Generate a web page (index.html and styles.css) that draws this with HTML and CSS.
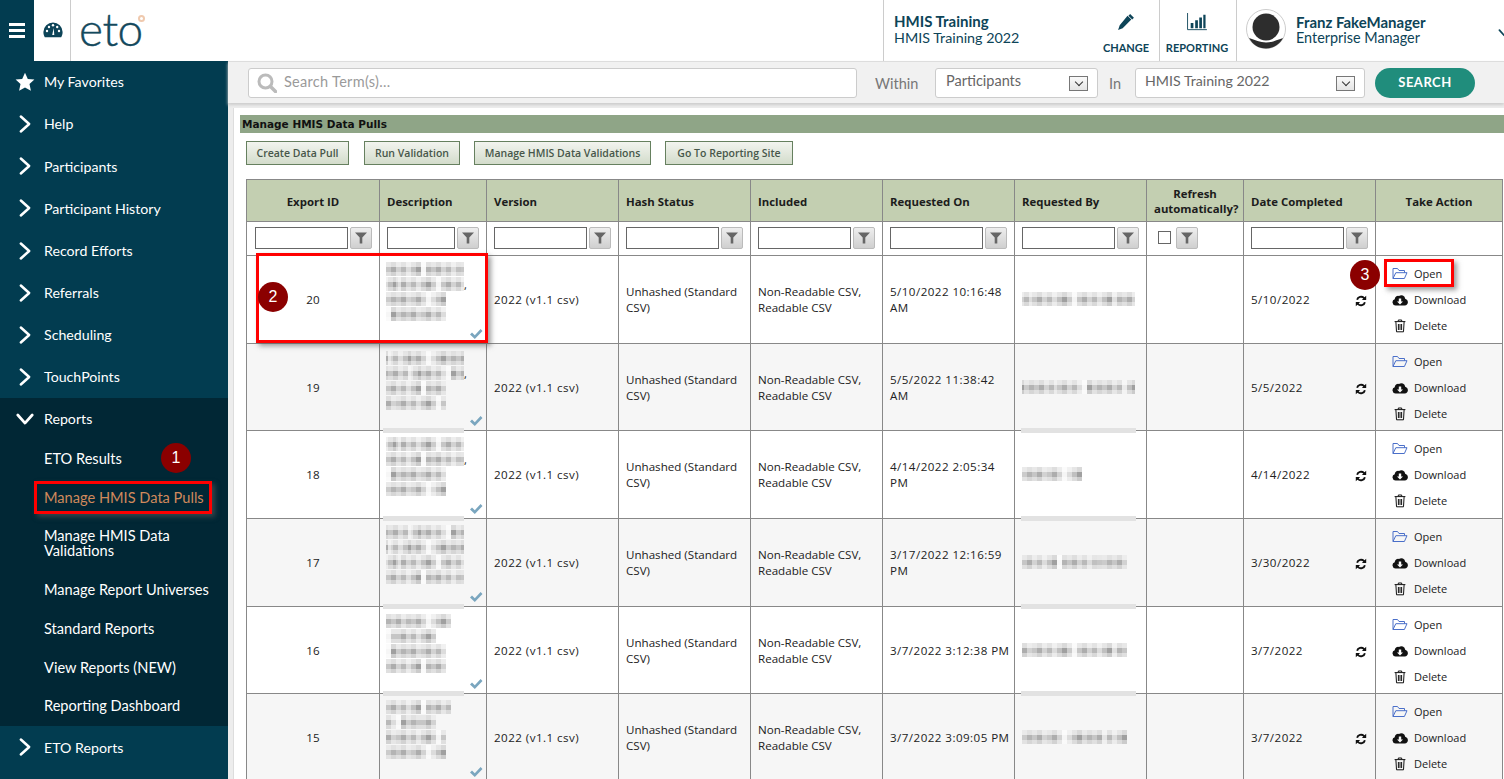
FILE: index.html
```html
<!DOCTYPE html>
<html lang="en">
<head>
    <meta charset="UTF-8">
    <title>Manage HMIS Data Pulls</title>
    <link rel="stylesheet" href="styles.css">
</head>
<body>
    <!-- icon sprite -->
    <svg class="sprite" xmlns="http://www.w3.org/2000/svg">
        <symbol id="i-chevron" viewBox="0 0 16 24"><path d="M3 3l10 9-10 9" fill="none" stroke="currentColor" stroke-width="3" stroke-linecap="round" stroke-linejoin="round"/></symbol>
        <symbol id="i-chevron-down" viewBox="0 0 20 14"><path d="M2 2l8 9 8-9" fill="none" stroke="currentColor" stroke-width="3" stroke-linecap="round" stroke-linejoin="round"/></symbol>
        <symbol id="i-star" viewBox="0 0 20 20"><path d="M10 .8l2.8 6.1 6.6.7-4.9 4.5 1.4 6.6L10 15.4l-5.9 3.3 1.4-6.6L.6 7.6l6.6-.7z" fill="currentColor"/></symbol>
        <symbol id="i-funnel" viewBox="0 0 12 12"><path d="M0 .5h12L7.3 5.6v5.9H4.7V5.6z" fill="#666"/></symbol>
        <symbol id="i-check" viewBox="0 0 14 12"><path d="M1 6.5l2-2 2.8 2.7L11.6 1 13.5 3l-7.7 8z" fill="#7aa6bf"/></symbol>
        <symbol id="i-sync" viewBox="0 0 14 14"><path d="M2.2 5.6A5 5 0 0 1 10.6 3.2L12.2 1.7V6H7.9L9.3 4.6A3.2 3.2 0 0 0 4 5.9zM11.8 8.4A5 5 0 0 1 3.4 10.8L1.8 12.3V8H6.1L4.7 9.4A3.2 3.2 0 0 0 10 8.1z" fill="#111"/></symbol>
        <symbol id="i-folder" viewBox="0 0 16 13"><path d="M1 11.5V1.5h4.5l1.5 2h5.5v2.2M1 11.5l2.8-5.8H15l-2.6 5.8z" fill="none" stroke="#4a6fc9" stroke-width="1" stroke-linejoin="round"/></symbol>
        <symbol id="i-cloud" viewBox="0 0 16 12"><path d="M3.6 11.6A3.3 3.3 0 0 1 2.7 5.2 3.4 3.4 0 0 1 7 2 3.9 3.9 0 0 1 13.2 4.7 3.5 3.5 0 0 1 12.7 11.6zM6.8 4.6v2.8H5L8 10.4l3-3H9.2V4.6z" fill="#111" fill-rule="evenodd"/></symbol>
        <symbol id="i-trash" viewBox="0 0 12 14"><path d="M4.3 2.2V1h3.4v1.2M.6 2.6h10.8M1.9 2.8l.6 10h7l.6-10M4.4 5v6M6 5v6M7.6 5v6" fill="none" stroke="#111" stroke-width="1"/></symbol>
    </svg>

    <header class="topbar">
        <button class="menu-toggle"><span></span><span></span><span></span></button>
        <div class="gauge">
            <svg width="20" height="16" viewBox="0 0 20 16">
                <path d="M10 .5A9.6 9.6 0 0 0 .4 10c0 2 .5 3.700 1.400 5.200h16.400c.9-1.500 1.400-3.200 1.400-5.200A9.600 9.600 0 0 0 10 .5z" fill="#0d4458"/>
                <g fill="#fff"><circle cx="4" cy="9" r="1.200"/><circle cx="6" cy="5" r="1.200"/><circle cx="10" cy="3.300" r="1.200"/><circle cx="14.200" cy="5" r="1.200"/><circle cx="16" cy="9" r="1.200"/><path d="M9.200 13l1.500-7 .6 7z"/></g>
            </svg>
        </div>
        <div class="logo">eto<span class="logo-dot"></span></div>
        <div class="context">
            <strong>HMIS Training</strong>
            <span>HMIS Training 2022</span>
        </div>
        <a class="tool tool-change">
            <svg width="18" height="18" viewBox="0 0 20 20"><path d="M14.600 1.200l4.200 4.200-1.900 1.900-4.200-4.200zM11.700 3.100l4.200 4.200L6.300 17l-5.100 1.900L3 13.600z" fill="#0d4458"/></svg>
            <b>CHANGE</b>
        </a>
        <a class="tool tool-reporting">
            <svg width="22" height="18" viewBox="0 0 22 20"><path d="M.5 0v18.500H22" fill="none" stroke="#0d4458"/><path d="M4 11h3v6H4zM9 8h3v9H9zM13.500 5h3v12h-3zM18 2h2.500v15H18z" fill="#0d4458"/></svg>
            <b>REPORTING</b>
        </a>
        <div class="user">
            <div class="avatar">
                <svg width="40" height="40" viewBox="0 0 40 40"><circle cx="20" cy="20" r="19.500" fill="#fff" stroke="#ccc"/><circle cx="20" cy="18" r="13.500" fill="#2d2d2d"/><path d="M3 29C9 31 14 33.500 20 33.500S31 31 37 29C33.500 35.500 27.500 39.500 20 39.500S6.500 35.500 3 29z" fill="#2d2d2d"/></svg>
            </div>
            <div class="user-text">
                <strong>Franz FakeManager</strong>
                <span>Enterprise Manager</span>
            </div>
            <svg class="user-caret" width="12" height="8"><use href="#i-chevron-down"/></svg>
        </div>
    </header>

    <div class="layout">
        <nav class="sidebar">
            <a class="nav-item"><svg class="nav-star" width="20" height="20"><use href="#i-star"/></svg>My Favorites</a>
            <a class="nav-item"><svg class="nav-arrow" width="16" height="20"><use href="#i-chevron"/></svg>Help</a>
            <a class="nav-item"><svg class="nav-arrow" width="16" height="20"><use href="#i-chevron"/></svg>Participants</a>
            <a class="nav-item"><svg class="nav-arrow" width="16" height="20"><use href="#i-chevron"/></svg>Participant History</a>
            <a class="nav-item"><svg class="nav-arrow" width="16" height="20"><use href="#i-chevron"/></svg>Record Efforts</a>
            <a class="nav-item"><svg class="nav-arrow" width="16" height="20"><use href="#i-chevron"/></svg>Referrals</a>
            <a class="nav-item"><svg class="nav-arrow" width="16" height="20"><use href="#i-chevron"/></svg>Scheduling</a>
            <a class="nav-item"><svg class="nav-arrow" width="16" height="20"><use href="#i-chevron"/></svg>TouchPoints</a>
            <div class="nav-open">
                <a class="nav-item"><svg class="nav-arrow-down" width="18" height="13"><use href="#i-chevron-down"/></svg>Reports</a>
                <div class="sub-list">
                    <a class="sub-item">ETO Results</a>
                    <a class="sub-item active">Manage HMIS Data Pulls</a>
                    <a class="sub-item tall">Manage HMIS Data Validations</a>
                    <a class="sub-item">Manage Report Universes</a>
                    <a class="sub-item">Standard Reports</a>
                    <a class="sub-item">View Reports (NEW)</a>
                    <a class="sub-item">Reporting Dashboard</a>
                </div>
            </div>
            <a class="nav-item"><svg class="nav-arrow" width="16" height="20"><use href="#i-chevron"/></svg>ETO Reports</a>
        </nav>

        <main class="content">
            <div class="searchbar">
                <div class="search-box">
                    <svg width="20" height="20" viewBox="0 0 20 20"><circle cx="8.500" cy="8.500" r="6.500" fill="none" stroke="#bbb" stroke-width="3"/><path d="M13.500 13.500l5 5" stroke="#bbb" stroke-width="3.500" stroke-linecap="round"/></svg>
                    <span>Search Term(s)...</span>
                </div>
                <label class="search-label within">Within</label>
                <div class="select select-within">Participants<i class="select-arrow"></i></div>
                <label class="search-label in">In</label>
                <div class="select select-in">HMIS Training 2022<i class="select-arrow"></i></div>
                <button class="search-btn">SEARCH</button>
            </div>

            <section class="panel">
                <h2 class="panel-title">Manage HMIS Data Pulls</h2>
                <div class="actions">
                    <button class="btn btn-create">Create Data Pull</button>
                    <button class="btn btn-run">Run Validation</button>
                    <button class="btn btn-manage">Manage HMIS Data Validations</button>
                    <button class="btn btn-site">Go To Reporting Site</button>
                </div>

                <table class="grid">
                    <colgroup>
                        <col class="c-id"><col class="c-desc"><col class="c-std"><col class="c-std"><col class="c-std"><col class="c-std"><col class="c-std"><col class="c-refresh"><col class="c-std"><col class="c-action">
                    </colgroup>
                    <thead>
                        <tr class="head-row">
                            <th class="center">Export ID</th>
                            <th>Description</th>
                            <th>Version</th>
                            <th>Hash Status</th>
                            <th>Included</th>
                            <th>Requested On</th>
                            <th>Requested By</th>
                            <th class="center two-line">Refresh automatically?</th>
                            <th>Date Completed</th>
                            <th class="center">Take Action</th>
                        </tr>
                        <tr class="filter-row">
                            <td><div class="filter first"><input type="text" class="f-wide"><span class="f-btn"><svg width="12" height="12"><use href="#i-funnel"/></svg></span></div></td>
                            <td><div class="filter"><input type="text" class="f-narrow"><span class="f-btn"><svg width="12" height="12"><use href="#i-funnel"/></svg></span></div></td>
                            <td><div class="filter"><input type="text" class="f-wide"><span class="f-btn"><svg width="12" height="12"><use href="#i-funnel"/></svg></span></div></td>
                            <td><div class="filter"><input type="text" class="f-wide"><span class="f-btn"><svg width="12" height="12"><use href="#i-funnel"/></svg></span></div></td>
                            <td><div class="filter"><input type="text" class="f-wide"><span class="f-btn"><svg width="12" height="12"><use href="#i-funnel"/></svg></span></div></td>
                            <td><div class="filter"><input type="text" class="f-wide"><span class="f-btn"><svg width="12" height="12"><use href="#i-funnel"/></svg></span></div></td>
                            <td><div class="filter"><input type="text" class="f-wide"><span class="f-btn"><svg width="12" height="12"><use href="#i-funnel"/></svg></span></div></td>
                            <td><div class="filter filter-check"><i class="f-check"></i><span class="f-btn"><svg width="12" height="12"><use href="#i-funnel"/></svg></span></div></td>
                            <td><div class="filter"><input type="text" class="f-wide"><span class="f-btn"><svg width="12" height="12"><use href="#i-funnel"/></svg></span></div></td>
                            <td></td>
                        </tr>
                    </thead>
                    <tbody>
                        <tr class="row h88">
                            <td class="center">20</td>
                            <td class="desc"><div class="smear w78"></div><div class="smear w78 s2"><span class="comma">,</span></div><div class="smear w60 s3"></div><div class="smear w60 s4"></div><svg class="tick" width="14" height="12"><use href="#i-check"/></svg></td>
                            <td class="num">2022 (v1.1 csv)</td>
                            <td>Unhashed (Standard CSV)</td>
                            <td>Non-Readable CSV, Readable CSV</td>
                            <td class="num">5/10/2022 10:16:48 AM</td>
                            <td class="by"><div class="smear w113 s2"></div></td>
                            <td></td>
                            <td class="num"><div class="done"><span>5/10/2022</span><svg width="14" height="14"><use href="#i-sync"/></svg></div></td>
                            <td class="take"><a><svg width="16" height="13"><use href="#i-folder"/></svg>Open</a><a><svg width="16" height="12"><use href="#i-cloud"/></svg>Download</a><a><svg width="16" height="14"><use href="#i-trash"/></svg>Delete</a></td>
                        </tr>
                        <tr class="row alt h87">
                            <td class="center">19</td>
                            <td class="desc"><div class="smear w78 s3"></div><div class="smear w78 s4"><span class="comma">,</span></div><div class="smear w60"></div><div class="smear w60 s2"></div><svg class="tick" width="14" height="12"><use href="#i-check"/></svg><i class="strip strip-desc"></i></td>
                            <td class="num">2022 (v1.1 csv)</td>
                            <td>Unhashed (Standard CSV)</td>
                            <td>Non-Readable CSV, Readable CSV</td>
                            <td class="num">5/5/2022 11:38:42 AM</td>
                            <td class="by"><div class="smear w113 s4"></div><i class="strip strip-by"></i></td>
                            <td></td>
                            <td class="num"><div class="done"><span>5/5/2022</span><svg width="14" height="14"><use href="#i-sync"/></svg></div></td>
                            <td class="take"><a><svg width="16" height="13"><use href="#i-folder"/></svg>Open</a><a><svg width="16" height="12"><use href="#i-cloud"/></svg>Download</a><a><svg width="16" height="14"><use href="#i-trash"/></svg>Delete</a></td>
                        </tr>
                        <tr class="row h88">
                            <td class="center">18</td>
                            <td class="desc"><div class="smear w78 s2"></div><div class="smear w78"><span class="comma">,</span></div><div class="smear w60 s4"></div><div class="smear w60 s3"></div><svg class="tick" width="14" height="12"><use href="#i-check"/></svg><i class="strip strip-desc"></i></td>
                            <td class="num">2022 (v1.1 csv)</td>
                            <td>Unhashed (Standard CSV)</td>
                            <td>Non-Readable CSV, Readable CSV</td>
                            <td class="num">4/14/2022 2:05:34 PM</td>
                            <td class="by"><div class="smear w60 s3"></div><i class="strip strip-by"></i></td>
                            <td></td>
                            <td class="num"><div class="done"><span>4/14/2022</span><svg width="14" height="14"><use href="#i-sync"/></svg></div></td>
                            <td class="take"><a><svg width="16" height="13"><use href="#i-folder"/></svg>Open</a><a><svg width="16" height="12"><use href="#i-cloud"/></svg>Download</a><a><svg width="16" height="14"><use href="#i-trash"/></svg>Delete</a></td>
                        </tr>
                        <tr class="row alt h88">
                            <td class="center">17</td>
                            <td class="desc"><div class="smear w78 s4"></div><div class="smear w78 s3"></div><div class="smear w78 s2"></div><div class="smear w78"></div><svg class="tick" width="14" height="12"><use href="#i-check"/></svg><i class="strip strip-desc"></i></td>
                            <td class="num">2022 (v1.1 csv)</td>
                            <td>Unhashed (Standard CSV)</td>
                            <td>Non-Readable CSV, Readable CSV</td>
                            <td class="num">3/17/2022 12:16:59 PM</td>
                            <td class="by"><div class="smear w105"></div><i class="strip strip-by"></i></td>
                            <td></td>
                            <td class="num"><div class="done"><span>3/30/2022</span><svg width="14" height="14"><use href="#i-sync"/></svg></div></td>
                            <td class="take"><a><svg width="16" height="13"><use href="#i-folder"/></svg>Open</a><a><svg width="16" height="12"><use href="#i-cloud"/></svg>Download</a><a><svg width="16" height="14"><use href="#i-trash"/></svg>Delete</a></td>
                        </tr>
                        <tr class="row h87">
                            <td class="center">16</td>
                            <td class="desc"><div class="smear w65 s3"></div><div class="smear w50 s2"></div><div class="smear w60 s4"></div><div class="smear w60"></div><svg class="tick" width="14" height="12"><use href="#i-check"/></svg><i class="strip strip-desc"></i></td>
                            <td class="num">2022 (v1.1 csv)</td>
                            <td>Unhashed (Standard CSV)</td>
                            <td>Non-Readable CSV, Readable CSV</td>
                            <td class="num">3/7/2022 3:12:38 PM</td>
                            <td class="by"><div class="smear w105 s2"></div><i class="strip strip-by"></i></td>
                            <td></td>
                            <td class="num"><div class="done"><span>3/7/2022</span><svg width="14" height="14"><use href="#i-sync"/></svg></div></td>
                            <td class="take"><a><svg width="16" height="13"><use href="#i-folder"/></svg>Open</a><a><svg width="16" height="12"><use href="#i-cloud"/></svg>Download</a><a><svg width="16" height="14"><use href="#i-trash"/></svg>Delete</a></td>
                        </tr>
                        <tr class="row alt h88">
                            <td class="center">15</td>
                            <td class="desc"><div class="smear w65"></div><div class="smear w50 s4"></div><div class="smear w60 s2"></div><div class="smear w60 s3"></div><svg class="tick" width="14" height="12"><use href="#i-check"/></svg><i class="strip strip-desc"></i></td>
                            <td class="num">2022 (v1.1 csv)</td>
                            <td>Unhashed (Standard CSV)</td>
                            <td>Non-Readable CSV, Readable CSV</td>
                            <td class="num">3/7/2022 3:09:05 PM</td>
                            <td class="by"><div class="smear w105 s3"></div><i class="strip strip-by"></i></td>
                            <td></td>
                            <td class="num"><div class="done"><span>3/7/2022</span><svg width="14" height="14"><use href="#i-sync"/></svg></div></td>
                            <td class="take"><a><svg width="16" height="13"><use href="#i-folder"/></svg>Open</a><a><svg width="16" height="12"><use href="#i-cloud"/></svg>Download</a><a><svg width="16" height="14"><use href="#i-trash"/></svg>Delete</a></td>
                        </tr>
                    </tbody>
                </table>
            </section>
        </main>
    </div>

    <!-- tutorial callouts drawn on top of the screen -->
    <div class="mark mark-1"></div>
    <div class="mark mark-2"></div>
    <div class="mark mark-3"></div>
    <div class="badge badge-1">1</div>
    <div class="badge badge-2">2</div>
    <div class="badge badge-3">3</div>
</body>
</html>
```
FILE: styles.css
```css
* { margin: 0; padding: 0; box-sizing: border-box; }
html, body { height: 779px; overflow: hidden; }
body {
    position: relative;
    background: #fff;
    font-family: "Liberation Sans", Arial, sans-serif;
    color: #222;
}
.sprite { display: none; }
a { display: block; }

/* top bar */
.topbar {
    display: flex;
    height: 61px;
    background: #fff;
    color: #0d4458;
    font-family: Lato, sans-serif;
}
.menu-toggle {
    width: 34px;
    background: #023c50;
    border: none;
    display: flex;
    flex-direction: column;
    justify-content: center;
    align-items: center;
    gap: 3px;
}
.menu-toggle span { width: 16px; height: 3px; background: #fff; }
.gauge {
    width: 37px;
    border-right: 1px solid #ccc;
    display: flex;
    align-items: center;
    justify-content: center;
    padding: 0 0 1px 1px;
}
.logo {
    position: relative;
    width: 813px;
    padding-left: 8px;
    font-size: 46px;
    font-weight: 300;
    line-height: 57px;
    color: #14495d;
    border-right: 1px solid #ccc;
    letter-spacing: -0.5px;
    -webkit-text-stroke: 0.4px #14495d;
}
.logo-dot {
    position: absolute;
    left: 67px;
    top: 15px;
    width: 7px;
    height: 7px;
    border: 2px solid #efc9ae;
    border-radius: 50%;
}
.context {
    width: 204px;
    padding: 14px 0 0 10px;
    font-size: 14.300px;
    line-height: 16px;
}
.context strong, .user-text strong { display: block; font-size: 15px; }
.context strong { margin: -1px 0 1px; }
.tool {
    display: flex;
    flex-direction: column;
    align-items: center;
    font-size: 11px;
    text-align: center;
}
.tool svg { margin-top: 13px; height: 18px; }
.tool b { margin-top: 10px; line-height: 13px; }
.tool-change { width: 72px; padding-left: 5px; border-right: 1px solid #ccc; }
.tool-reporting { width: 77px; padding-right: 2px; border-right: 1px solid #ccc; }
.user {
    position: relative;
    flex: 1;
    display: flex;
    padding: 9px 0 0 9px;
}
.avatar { width: 40px; height: 40px; }
.user-text {
    margin-left: 10px;
    padding-top: 5px;
    font-size: 14.400px;
    line-height: 16px;
}
.user-caret {
    position: absolute;
    right: -6px;
    top: 29px;
}

/* sidebar */
.layout { display: flex; height: 718px; }
.sidebar {
    width: 228px;
    flex: none;
    background: #023c50;
    color: #fff;
    font-family: Lato, sans-serif;
    font-size: 14.200px;
    overflow: hidden;
}
.nav-item {
    display: flex;
    align-items: center;
    height: 42.130px;
    padding: 0 0 0.480px 44px;
    position: relative;
}
.nav-item svg { position: absolute; }
.nav-star { left: 15px; top: 11px; }
.nav-arrow { left: 17px; top: 11px; }
.nav-arrow-down { left: 16px; top: 15px; }
.nav-open { background: #012735; height: 328px; }
.nav-open .nav-item { padding-bottom: 2px; }
.nav-open + .nav-item { padding: 1px 0 0 44px; }
.sub-list { margin-top: -1px; font-size: 14.600px; }
.sub-item {
    display: flex;
    align-items: center;
    height: 38.700px;
    padding-left: 44px;
    line-height: 15px;
}
.sub-item.tall { height: 53.800px; padding-right: 30px; }
.sub-item.active { color: #d0895c; }

/* search strip */
.content { flex: 1; min-width: 0; background: #ededed; }
.searchbar {
    display: flex;
    align-items: flex-start;
    height: 42px;
    padding: 6px 0 0 20px;
    background: #f1f1f1;
    border-top: 1px solid #ddd;
    box-shadow: 0 2px 3px #ccc;
    font-family: Lato, sans-serif;
    font-size: 14.500px;
    color: #777;
}
.search-box {
    display: flex;
    align-items: center;
    gap: 7px;
    width: 609px;
    height: 30px;
    padding: 0 0 3px 8px;
    background: #fff;
    border: 1px solid #ccc;
    border-radius: 3px;
    color: #9a9a9a;
    letter-spacing: 0.3px;
}
.search-box svg { margin-top: 3px; }
.search-label { padding-top: 7px; line-height: 17px; }
.within { width: 60px; margin-left: 18px; }
.in { width: 26px; margin-left: 11px; }
.select {
    position: relative;
    height: 30px;
    padding-left: 10px;
    background: #fff;
    border: 1px solid #ccc;
    border-radius: 3px;
    line-height: 24px;
    color: #666;
}
.select-within { width: 163px; }
.select-in { width: 230px; padding-left: 9px; font-size: 14.200px; }
.select-arrow {
    position: absolute;
    right: 9px;
    top: 7px;
    width: 19px;
    height: 15px;
    background: linear-gradient(#fafafa, #e4e4e4);
    border: 1px solid #777;
}
.select-arrow::after {
    content: "";
    position: absolute;
    left: 6px;
    top: 2px;
    width: 5px;
    height: 5px;
    border-right: 1.500px solid #333;
    border-bottom: 1.500px solid #333;
    transform: rotate(45deg);
}
.search-btn {
    width: 100px;
    height: 30px;
    margin-left: 10px;
    padding-bottom: 3px;
    background: #208d7c;
    border: none;
    border-radius: 15px;
    color: #fff;
    font-family: Lato, sans-serif;
    font-size: 13px;
    font-weight: bold;
    letter-spacing: 0.5px;
}

/* panel */
.panel {
    height: 680px;
    margin: 5px 0 0 5px;
    padding: 7px 0 0 7px;
    background: #fff;
    box-shadow: inset 1px 0 0 #ddd;
    overflow: hidden;
}
.panel-title {
    height: 18px;
    padding-left: 2px;
    background: #8fa587;
    font-family: "DejaVu Sans", sans-serif;
    font-size: 10.500px;
    line-height: 18px;
    color: #111;
}
.actions { display: flex; padding: 8px 0 0 6px; }
.btn {
    height: 24px;
    background: linear-gradient(#f2f4ef, #d3dccb);
    border: 1px solid #66805f;
    font-family: "Open Sans", sans-serif;
    font-size: 10.500px;
    font-weight: 600;
    color: #47574a;
}
.btn-create { width: 103px; }
.btn-run { width: 96px; margin-left: 15px; }
.btn-manage { width: 177px; margin-left: 14px; }
.btn-site { width: 128px; margin-left: 14px; }

/* data grid */
.grid {
    width: 1257px;
    margin: 14px 0 0 6px;
    border-collapse: collapse;
    table-layout: fixed;
    font-family: "Open Sans", sans-serif;
    font-size: 11.600px;
    line-height: 16px;
    color: #222;
}
.c-id { width: 133px; }
.c-desc { width: 107px; }
.c-std { width: 132px; }
.c-refresh { width: 97px; }
.c-action { width: 127px; }
.grid th, .grid td { border: 1px solid #888; padding: 0 7px; text-align: left; position: relative; }
.grid .center { text-align: center; }
.grid .num { padding-right: 1px; letter-spacing: 0.45px; }
.head-row { height: 42px; background: #c3cfb1; }
.grid th { padding-top: 2px; font-size: 11.400px; line-height: 15px; font-weight: 700; color: #1c1c1c; }
.grid th.two-line { padding-top: 0; }
.filter-row { height: 34px; }
.grid .filter-row td { padding-bottom: 2px; }
.filter { display: flex; gap: 2px; align-items: center; }
.filter.first { padding-left: 1px; }
.filter input { height: 22px; border: 1px solid #666; background: #fff; }
.f-wide { width: 93px; }
.f-narrow { width: 68px; }
.f-btn {
    display: flex;
    align-items: center;
    justify-content: center;
    width: 22px;
    height: 22px;
    background: linear-gradient(#eee, #cfcfcf);
    border: 1px solid #bbb;
    border-radius: 2px;
}
.filter-check { padding-left: 4px; gap: 5px; }
.f-check { width: 13px; height: 13px; border: 1px solid #666; background: #fff; }
.h88 { height: 88px; }
.h87 { height: 87px; }
.grid .h87 td { padding-top: 1px; }
.alt { background: #f6f6f6; }

/* pixelated, redacted text */
.smear {
    position: relative;
    height: 14px;
    margin-bottom: 1px;
    background-image:
        linear-gradient(rgba(255,255,255,.6) 0 5px, rgba(255,255,255,0) 5px 10px, rgba(255,255,255,.45) 10px 14px),
        repeating-linear-gradient(90deg, rgba(255,255,255,0) 0 35px, rgba(255,255,255,.85) 35px 40px, rgba(255,255,255,0) 40px 75px, rgba(255,255,255,.4) 75px 80px, rgba(255,255,255,0) 80px 110px),
        repeating-linear-gradient(90deg, #c6c6c6 0 5px, #adadad 5px 10px, #d2d2d2 10px 15px, #b9b9b9 15px 20px, #dcdcdc 20px 25px, #c0c0c0 25px 30px, #a0a0a0 30px 35px, #cbcbcb 35px 40px, #b4b4b4 40px 45px);
}
.s2 { background-position: 0 0, 15px 0, 10px 0; }
.s3 { background-position: 0 0, 5px 0, 25px 0; }
.s4 { background-position: 0 0, 25px 0, 35px 0; }
.comma { position: absolute; left: 100%; top: 2px; font-size: 11px; line-height: 12px; color: #222; }
.w50 { width: 50px; }
.w60 { width: 60px; }
.w65 { width: 65px; }
.w78 { width: 78px; }
.w105 { width: 105px; }
.w113 { width: 113px; }
.grid .desc { padding: 6px 0 0 6px; vertical-align: top; }
.grid .h87 .desc { padding-top: 7px; }
.tick { position: absolute; right: 3px; bottom: 3px; }
.strip { position: absolute; bottom: -3px; height: 5px; background: #e2e2e2; z-index: 1; }
.strip-desc { left: 3px; width: 81px; }
.strip-by { left: 6px; width: 115px; }
.done { display: flex; justify-content: space-between; align-items: center; padding-right: 6px; }
.done svg { margin-top: 3px; }
.take { font-size: 11px; }
.take a { display: flex; align-items: center; gap: 6px; height: 26px; padding-left: 9px; }
.take svg { flex: none; }

/* callouts */
.mark {
    position: absolute;
    border: 3px solid #f00;
    box-shadow: 3px 3px 5px rgba(90, 90, 90, 0.6);
}
.mark-1 { left: 34px; top: 481px; width: 178px; height: 33px; }
.mark-2 { left: 256px; top: 253px; width: 232px; height: 90px; }
.mark-3 { left: 1384px; top: 259px; width: 70px; height: 28px; }
.badge {
    position: absolute;
    width: 30px;
    height: 30px;
    border-radius: 50%;
    background: #8b0000;
    color: #fff;
    font-size: 16px;
    line-height: 30px;
    text-align: center;
}
.badge-1 { left: 161px; top: 443px; }
.badge-2 { left: 258px; top: 282px; }
.badge-3 { left: 1350px; top: 260px; }
```
